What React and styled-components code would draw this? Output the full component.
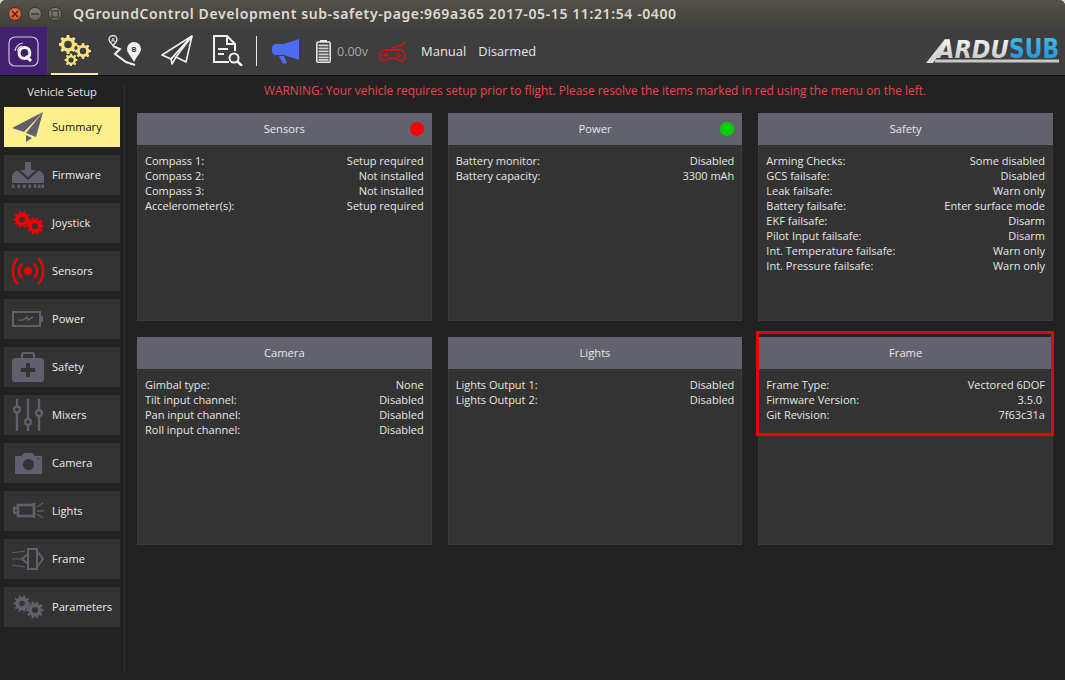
import styled, { createGlobalStyle } from 'styled-components'

const GlobalStyle = createGlobalStyle`
  html, body {
    margin: 0;
    height: 100%;
    overflow: hidden;
    background: #d8d6d2;
  }
  #root {
    height: 100%;
  }
`;

const Window = styled.div`
  height: 100vh;
  display: flex;
  flex-direction: column;
  font-family: "Open Sans", "Liberation Sans", sans-serif;
  background: #222222;
  border-radius: 6px 6px 0 0;
  overflow: hidden;
`;
const TitleBar = styled.div`
  height: 27px;
  flex: none;
  display: flex;
  align-items: center;
  padding-left: 8px;
  background: linear-gradient(#55524b, #403f3b);
`;
const WindowButton = styled.span`
  width: 14px;
  height: 14px;
  margin-right: 6px;
  border-radius: 50%;
  border: 1px solid #38362f;
  box-sizing: border-box;
  display: flex;
  align-items: center;
  justify-content: center;
  background: ${p => p.$close ? 'radial-gradient(circle at 50% 35%, #f4794a, #d9451c)' : 'linear-gradient(#85837c, #66645d)'};
`;
const WindowTitle = styled.span`
  margin-left: 5px;
  font-family: "Noto Sans", sans-serif;
  font-size: 14px;
  font-weight: 600;
  letter-spacing: 0.61px;
  color: #dfdbd2;
  white-space: nowrap;
`;
const Toolbar = styled.div`
  height: 48px;
  flex: none;
  display: flex;
  align-items: stretch;
  background: #3e3e3e;
  border-bottom: 1px solid #111;
  padding-right: 5px;
`;
const LogoBox = styled.div`
  width: 47px;
  display: flex;
  align-items: center;
  justify-content: center;
  background: #43206f;
`;
const ToolButton = styled.div`
  width: 47px;
  margin-left: 4px;
  display: flex;
  align-items: center;
  justify-content: center;
  box-sizing: border-box;
  border-bottom: 2px solid ${p => p.$active ? '#fbee8b' : 'transparent'};
`;
const Divider = styled.div`
  width: 1px;
  height: 30px;
  align-self: center;
  margin: 0 15px 0 5px;
  background: #e8e8e8;
`;
const Indicator = styled.div`
  display: flex;
  align-items: center;
  margin-right: ${p => p.$gap || 0}px;
`;
const Voltage = styled.span`
  font-size: 12.5px;
  color: #a9a9a9;
`;
const StatusText = styled.span`
  align-self: center;
  font-size: ${p => p.$size || 13}px;
  color: #e6e6e6;
  margin-right: ${p => p.$gap || 0}px;
`;
const BrandLogo = styled.div`
  margin-left: auto;
  display: flex;
  align-items: center;
`;
const Body = styled.div`
  flex: 1;
  display: flex;
  min-height: 0;
`;
const Sidebar = styled.nav`
  width: 116px;
  padding: 8px 4px 0;
  display: flex;
  flex-direction: column;
  gap: 8px;
  flex: none;
`;
const SidebarTitle = styled.div`
  font-size: 11.1px;
  line-height: 16px;
  text-align: center;
  color: #e2e2e2;
  white-space: nowrap;
  height: 15px;
`;
const NavButton = styled.div`
  height: 40px;
  display: flex;
  align-items: center;
  padding: 0 0 0 8px;
  gap: 8px;
  background: ${p => p.$active ? '#fdf08c' : '#333333'};
  color: ${p => p.$active ? '#111' : '#ececec'};
  font-size: 11.1px;
`;
const NavLabel = styled.span`
  margin-bottom: 1px;
`;
const NavIcon = styled.span`
  width: 32px;
  height: 32px;
  display: flex;
  align-items: center;
  justify-content: center;
  flex: none;
`;
const Separator = styled.div`
  width: 1px;
  flex: none;
  margin: 8px 0 8px 0;
  background: #303030;
`;
const Main = styled.main`
  flex: 1;
  min-width: 0;
  padding: 6px 12px 0;
`;
const Warning = styled.div`
  font-size: 11.9px;
  line-height: 16px;
  text-align: center;
  color: #e8474d;
  margin-bottom: 15px;
`;
const CardGrid = styled.div`
  display: grid;
  grid-template-columns: repeat(3, 1fr);
  grid-auto-rows: 208px;
  gap: 16px;
`;
const Card = styled.section`
  position: relative;
  background: #333333;
  outline: 1px solid #3a3a3a;
  outline-offset: -1px;
`;
const CardHeader = styled.header`
  position: relative;
  height: 32px;
  box-sizing: border-box;
  padding-bottom: 2px;
  display: flex;
  align-items: center;
  justify-content: center;
  background: #62626f;
  font-size: 11.2px;
  color: #e8e8e8;
`;
const StatusDot = styled.span`
  position: absolute;
  right: 8px;
  top: 9px;
  width: 14px;
  height: 14px;
  border-radius: 50%;
  background: ${p => p.$color};
`;
const CardBody = styled.div`
  padding: 8px;
`;
const Row = styled.div`
  display: flex;
  justify-content: space-between;
  font-size: 11px;
  line-height: 15px;
  color: #e6e6e6;
  white-space: pre;
`;
const Highlight = styled.div`
  position: absolute;
  left: -2px;
  right: -1px;
  top: -6px;
  height: 105px;
  box-sizing: border-box;
  border: 3px solid #ee0000;
  pointer-events: none;
`;

// polar gear outline, hole cut with evenodd
const gearPath = (cx, cy, r, teeth, hole) => {
  const pts = [];
  const step = (Math.PI * 2) / teeth;
  for (let i = 0; i < teeth; i++) {
    const a = i * step;
    [[-0.3, r * 0.76], [-0.17, r], [0.17, r], [0.3, r * 0.76]].forEach(([o, rad]) => {
      const t = a + o * step;
      pts.push(`${(cx + Math.cos(t) * rad).toFixed(2)} ${(cy + Math.sin(t) * rad).toFixed(2)}`);
    });
  }
  const ring = `M${cx - hole} ${cy}a${hole} ${hole} 0 1 0 ${hole * 2} 0a${hole} ${hole} 0 1 0 ${-hole * 2} 0Z`;
  return `M${pts.join('L')}Z${ring}`;
};

const CloseGlyph = () => (
  <svg width="8" height="8" viewBox="0 0 8 8" stroke="#4a2412" strokeWidth="1.600"><path d="M1 1l6 6M7 1L1 7" /></svg>
);
const MinGlyph = () => (
  <svg width="8" height="8" viewBox="0 0 8 8" stroke="#3a3833" strokeWidth="1.600"><path d="M0 4h8" /></svg>
);
const MaxGlyph = () => (
  <svg width="8" height="8" viewBox="0 0 8 8" fill="none" stroke="#3a3833" strokeWidth="1.200"><rect x="0.800" y="0.800" width="6.400" height="6.400" /></svg>
);

const QLogo = () => (
  <svg width="31" height="31" viewBox="0 0 31 31" fill="none">
    <rect x="1" y="1" width="29" height="29" rx="6" stroke="#cfc4dc" strokeWidth="1.200" />
    <circle cx="16.500" cy="17" r="5.400" stroke="#fff" strokeWidth="3" />
    <path d="M18 20l5 5" stroke="#fff" strokeWidth="3" />
    <path d="M7 15a9 9 0 0 1 8-8M9.500 15a6 6 0 0 1 5-5" stroke="#d8cfe4" strokeWidth="1.200" />
  </svg>
);
const SetupGears = () => (
  <svg width="32" height="31" viewBox="0 0 32 31" fill="#f6e27e">
    <path fillRule="evenodd" d={gearPath(9, 9.500, 9.500, 8, 3.800)} />
    <path fillRule="evenodd" d={gearPath(24, 16, 8, 8, 3.200)} />
    <path fillRule="evenodd" d={gearPath(12, 25, 6.500, 8, 2.600)} />
  </svg>
);
const RouteIcon = () => (
  <svg width="36" height="31" viewBox="0 0 36 31" fill="none" stroke="#f0f0f0">
    <path d="M1 4.500a4 4 0 1 1 8 0c0 2-2 3.500-4 6-2-2.500-4-4-4-6Z" strokeWidth="1.300" />
    <path d="M19 14a7 7 0 1 1 14 0c0 4-4 7-7 13-3-6-7-9-7-13Z" fill="#f0f0f0" stroke="none" />
    <path d="M5 11l7 3-5 5 11 8 9 3" strokeWidth="2" />
    <text x="26" y="17" fontSize="7.500" fontWeight="700" fill="#3e3e3e" stroke="none" textAnchor="middle" fontFamily="Open Sans">B</text>
    <text x="5" y="6.500" fontSize="5" fontWeight="700" fill="#f0f0f0" stroke="none" textAnchor="middle" fontFamily="Open Sans">A</text>
  </svg>
);
const PlaneIcon = () => (
  <svg width="32" height="30" viewBox="0 0 32 30" fill="none" stroke="#f0f0f0" strokeWidth="1.600" strokeLinejoin="round">
    <path d="M31 1L1 20l9 4L31 1L25 27l-10-5-4 7-1-5" />
    <path d="M31 1L15 22" />
    <path d="M31 1L10 24" />
  </svg>
);
const DocIcon = () => (
  <svg width="31" height="31" viewBox="0 0 31 31" fill="none" stroke="#f0f0f0" strokeWidth="2">
    <path d="M17 27H2V1h13l8 8v7M15 1v8h8" />
    <path d="M6 14h10M6 19h6" />
    <circle cx="22" cy="23" r="4.500" />
    <path d="M25 26l5 5" strokeWidth="2.500" />
  </svg>
);
const MegaphoneIcon = () => (
  <svg width="27" height="26" viewBox="0 0 27 26" fill="#4e6cf0">
    <path d="M27 1v21L12 17H4a4 4 0 0 1-4-4V10a4 4 0 0 1 4-4h8Z" />
    <path d="M7 18h5l3 7-4 1Z" />
  </svg>
);
const BatteryIcon = () => (
  <svg width="15" height="23" viewBox="0 0 15 23" fill="#e8e8e8">
    <rect x="4" y="0" width="7" height="2" />
    <rect x="0.800" y="2" width="13.400" height="20.200" rx="1.500" fill="none" stroke="#e8e8e8" strokeWidth="1.600" />
    {[4.500, 7.500, 10.500, 13.500, 16.500, 19].map(y => <rect key={y} x="2.500" y={y} width="10" height="1.800" fill="#d0d0d0" />)}
  </svg>
);
const JoystickIcon = () => (
  <svg width="27" height="21" viewBox="0 0 27 21" fill="none" stroke="#c4161c" strokeWidth="1.800">
    <path d="M6 9h15c3 0 5 3 5 6.500 0 3-2 4.500-4.500 4.500-1.500 0-2.500-1-3.500-2.500H9C8 19 7 20 5.500 20 3 20 1 18.500 1 15.500 1 12 3 9 6 9Z" />
    <path d="M13 9c0-5 10-2 13-8" />
    <path d="M4.500 14h5M7 11.500v5" />
    <path d="M19.500 11.800l2.200 2.200-2.200 2.200-2.200-2.200Z" strokeWidth="1.200" />
  </svg>
);
const BrandMark = () => (
  <svg width="136" height="40" viewBox="0 0 136 40">
    <defs>
      <linearGradient id="ardu" x1="0" y1="0" x2="0" y2="1">
        <stop offset="0" stopColor="#ffffff" />
        <stop offset="1" stopColor="#bdbdbd" />
      </linearGradient>
      <linearGradient id="sub" x1="0" y1="0" x2="0" y2="1">
        <stop offset="0" stopColor="#45bdf0" />
        <stop offset="1" stopColor="#1b8fd0" />
      </linearGradient>
    </defs>
    <path d="M2 32L21 8h5L9 32Z" fill="#d8d8d8" />
    <text transform="translate(13 27) scale(1 1.13)" fontFamily="DejaVu Sans" fontWeight="700" fontStyle="italic" fontSize="22.500" fill="url(#ardu)">ARDU</text>
    <text transform="translate(85 27) scale(1 1.18)" fontFamily="DejaVu Sans" fontWeight="700" fontSize="21.800" fill="url(#sub)">SUB</text>
    <rect x="11" y="28.500" width="124" height="3" fill="#c8c8c8" />
  </svg>
);

const grey = '#5f5f6d';
const red = '#f00000';

const Plane = () => (
  <svg width="32" height="30" viewBox="0 0 32 30" fill={grey}>
    <path d="M31 0L0 16l12 4Z" />
    <path d="M31 0L14 21l10 4Z" />
    <path d="M14 23v7l6-4Z" />
  </svg>
);
const Firmware = () => (
  <svg width="32" height="26" viewBox="0 0 32 26" fill={grey}>
    <path d="M13 0h6v8h5l-8 7-8-7h5Z" />
    <path d="M4 9h2l10 9 10-9h2q4 2 4 6v6H0v-6q0-4 4-6Z" />
    {[0, 5.500, 11, 16.500, 22, 26, 29.500].map(x => <rect key={x} x={x} y="22.500" width="2.500" height="3.500" />)}
  </svg>
);
const Gears = ({ color }) => (
  <svg width="31" height="24" viewBox="0 0 31 24" fill={color}>
    <path fillRule="evenodd" d={gearPath(9, 8.500, 8.500, 10, 2.800)} />
    <path fillRule="evenodd" d={gearPath(22, 15, 8.800, 10, 3)} />
  </svg>
);
const Sensors = () => (
  <svg width="32" height="32" viewBox="0 0 32 32" fill="none" stroke={red} strokeWidth="2.400">
    <circle cx="16" cy="16" r="4" fill={red} stroke="none" />
    <path d="M10 9c-4 4-4 10 0 14M22 9c4 4 4 10 0 14" />
    <path d="M6 3c-7 7-7 19 0 26M26 3c7 7 7 19 0 26" />
  </svg>
);
const Power = () => (
  <svg width="32" height="16" viewBox="0 0 32 16" fill="none" stroke={grey} strokeWidth="2">
    <rect x="1" y="1" width="27" height="14" />
    <rect x="29" y="5" width="2" height="6" fill={grey} stroke="none" />
    <path d="M6 9l5 0 4-3 1 3 5-3" strokeWidth="1.500" />
  </svg>
);
const Safety = () => (
  <svg width="32" height="30" viewBox="0 0 32 30" fill={grey}>
    <path d="M10 6V3a2 2 0 0 1 2-2h8a2 2 0 0 1 2 2v3" fill="none" stroke={grey} strokeWidth="2" />
    <path fillRule="evenodd" d="M3 6h26a3 3 0 0 1 3 3v18a3 3 0 0 1-3 3H3a3 3 0 0 1-3-3V9a3 3 0 0 1 3-3ZM14 11v5H9v4h5v5h4v-5h5v-4h-5v-5Z" />
  </svg>
);
const Mixers = () => (
  <svg width="30" height="32" viewBox="0 0 30 32" fill="none" stroke={grey} strokeWidth="2.400">
    <path d="M4 0v7M4 14v18M15 0v20M15 26v6M26 0v11M26 17v15" />
    <circle cx="4" cy="10.500" r="3" />
    <circle cx="15" cy="23" r="3" />
    <circle cx="26" cy="14" r="3" />
  </svg>
);
const Camera = () => (
  <svg width="27" height="21" viewBox="0 0 27 21" fill={grey}>
    <path fillRule="evenodd" d="M1 3h6l2-3h9l2 3h6a1 1 0 0 1 1 1v16a1 1 0 0 1-1 1H1a1 1 0 0 1-1-1V4a1 1 0 0 1 1-1ZM13.500 6a5.500 5.500 0 1 0 0 11 5.500 5.500 0 0 0 0-11Z" />
    <circle cx="23.500" cy="5.500" r="1" fill="#333" />
  </svg>
);
const Lights = () => (
  <svg width="31" height="20" viewBox="0 0 31 20" fill="none" stroke={grey} strokeWidth="2.400">
    <rect x="5" y="4" width="16" height="11" strokeWidth="2.600" />
    <path d="M5 7H1v5h4M21 2v15" />
    <path d="M24 6l6-4M24 10h7M24 13l6 4" strokeWidth="1.500" />
  </svg>
);
const Frame = () => (
  <svg width="32" height="22" viewBox="0 0 32 22" fill="none" stroke={grey} strokeWidth="2">
    <rect x="16" y="1" width="9" height="20" />
    <path d="M16 6l-6 5 6 5M25 3l6 8-6 8" />
    <path d="M0 5l13-2M0 11h9M0 17l13 2" strokeWidth="1.200" />
  </svg>
);

const navItems = [
  { label: 'Summary', icon: <Plane />, active: true },
  { label: 'Firmware', icon: <Firmware /> },
  { label: 'Joystick', icon: <Gears color={red} /> },
  { label: 'Sensors', icon: <Sensors /> },
  { label: 'Power', icon: <Power /> },
  { label: 'Safety', icon: <Safety /> },
  { label: 'Mixers', icon: <Mixers /> },
  { label: 'Camera', icon: <Camera /> },
  { label: 'Lights', icon: <Lights /> },
  { label: 'Frame', icon: <Frame /> },
  { label: 'Parameters', icon: <Gears color={grey} /> },
];

const cards = [
  { title: 'Sensors', dot: '#ff0000', rows: [['Compass 1:', 'Setup required'], ['Compass 2:', 'Not installed'], ['Compass 3:', 'Not installed'], ['Accelerometer(s):', 'Setup required']] },
  { title: 'Power', dot: '#00d000', rows: [['Battery monitor:', 'Disabled'], ['Battery capacity:', '3300 mAh']] },
  { title: 'Safety', rows: [['Arming Checks:', 'Some disabled'], ['GCS failsafe:', 'Disabled'], ['Leak failsafe:', 'Warn only'], ['Battery failsafe:', 'Enter surface mode'], ['EKF failsafe:', 'Disarm'], ['Pilot Input failsafe:', 'Disarm'], ['Int. Temperature failsafe:', 'Warn only'], ['Int. Pressure failsafe:', 'Warn only']] },
  { title: 'Camera', rows: [['Gimbal type:', 'None'], ['Tilt input channel:', 'Disabled'], ['Pan input channel:', 'Disabled'], ['Roll input channel:', 'Disabled']] },
  { title: 'Lights', rows: [['Lights Output 1:', 'Disabled'], ['Lights Output 2:', 'Disabled']] },
  { title: 'Frame', highlight: true, rows: [['Frame Type:', 'Vectored 6DOF'], ['Firmware Version:', '3.5.0 '], ['Git Revision:', '7f63c31a']] },
];

const App = () => {
  return (
    <Window>
      <GlobalStyle />
      <TitleBar>
        <WindowButton $close><CloseGlyph /></WindowButton>
        <WindowButton><MinGlyph /></WindowButton>
        <WindowButton><MaxGlyph /></WindowButton>
        <WindowTitle>QGroundControl Development sub-safety-page:969a365 2017-05-15 11:21:54 -0400</WindowTitle>
      </TitleBar>
      <Toolbar>
        <LogoBox><QLogo /></LogoBox>
        <ToolButton $active><SetupGears /></ToolButton>
        <ToolButton><RouteIcon /></ToolButton>
        <ToolButton><PlaneIcon /></ToolButton>
        <ToolButton><DocIcon /></ToolButton>
        <Divider />
        <Indicator $gap={17}><MegaphoneIcon /></Indicator>
        <Indicator $gap={6}><BatteryIcon /></Indicator>
        <Indicator $gap={11}><Voltage>0.00v</Voltage></Indicator>
        <Indicator $gap={15}><JoystickIcon /></Indicator>
        <StatusText $gap={12}>Manual</StatusText>
        <StatusText $size={12.8}>Disarmed</StatusText>
        <BrandLogo><BrandMark /></BrandLogo>
      </Toolbar>
      <Body>
        <Sidebar>
          <SidebarTitle>Vehicle Setup</SidebarTitle>
          {navItems.map(item => (
            <NavButton key={item.label} $active={item.active}>
              <NavIcon>{item.icon}</NavIcon>
              <NavLabel>{item.label}</NavLabel>
            </NavButton>
          ))}
        </Sidebar>
        <Separator />
        <Main>
          <Warning>WARNING: Your vehicle requires setup prior to flight. Please resolve the items marked in red using the menu on the left.</Warning>
          <CardGrid>
            {cards.map(card => (
              <Card key={card.title}>
                <CardHeader>
                  {card.title}
                  {card.dot && <StatusDot $color={card.dot} />}
                </CardHeader>
                <CardBody>
                  {card.rows.map(([name, value]) => (
                    <Row key={name}>
                      <span>{name}</span>
                      <span>{value}</span>
                    </Row>
                  ))}
                </CardBody>
                {card.highlight && <Highlight />}
              </Card>
            ))}
          </CardGrid>
        </Main>
      </Body>
    </Window>
  )
}

export default App
